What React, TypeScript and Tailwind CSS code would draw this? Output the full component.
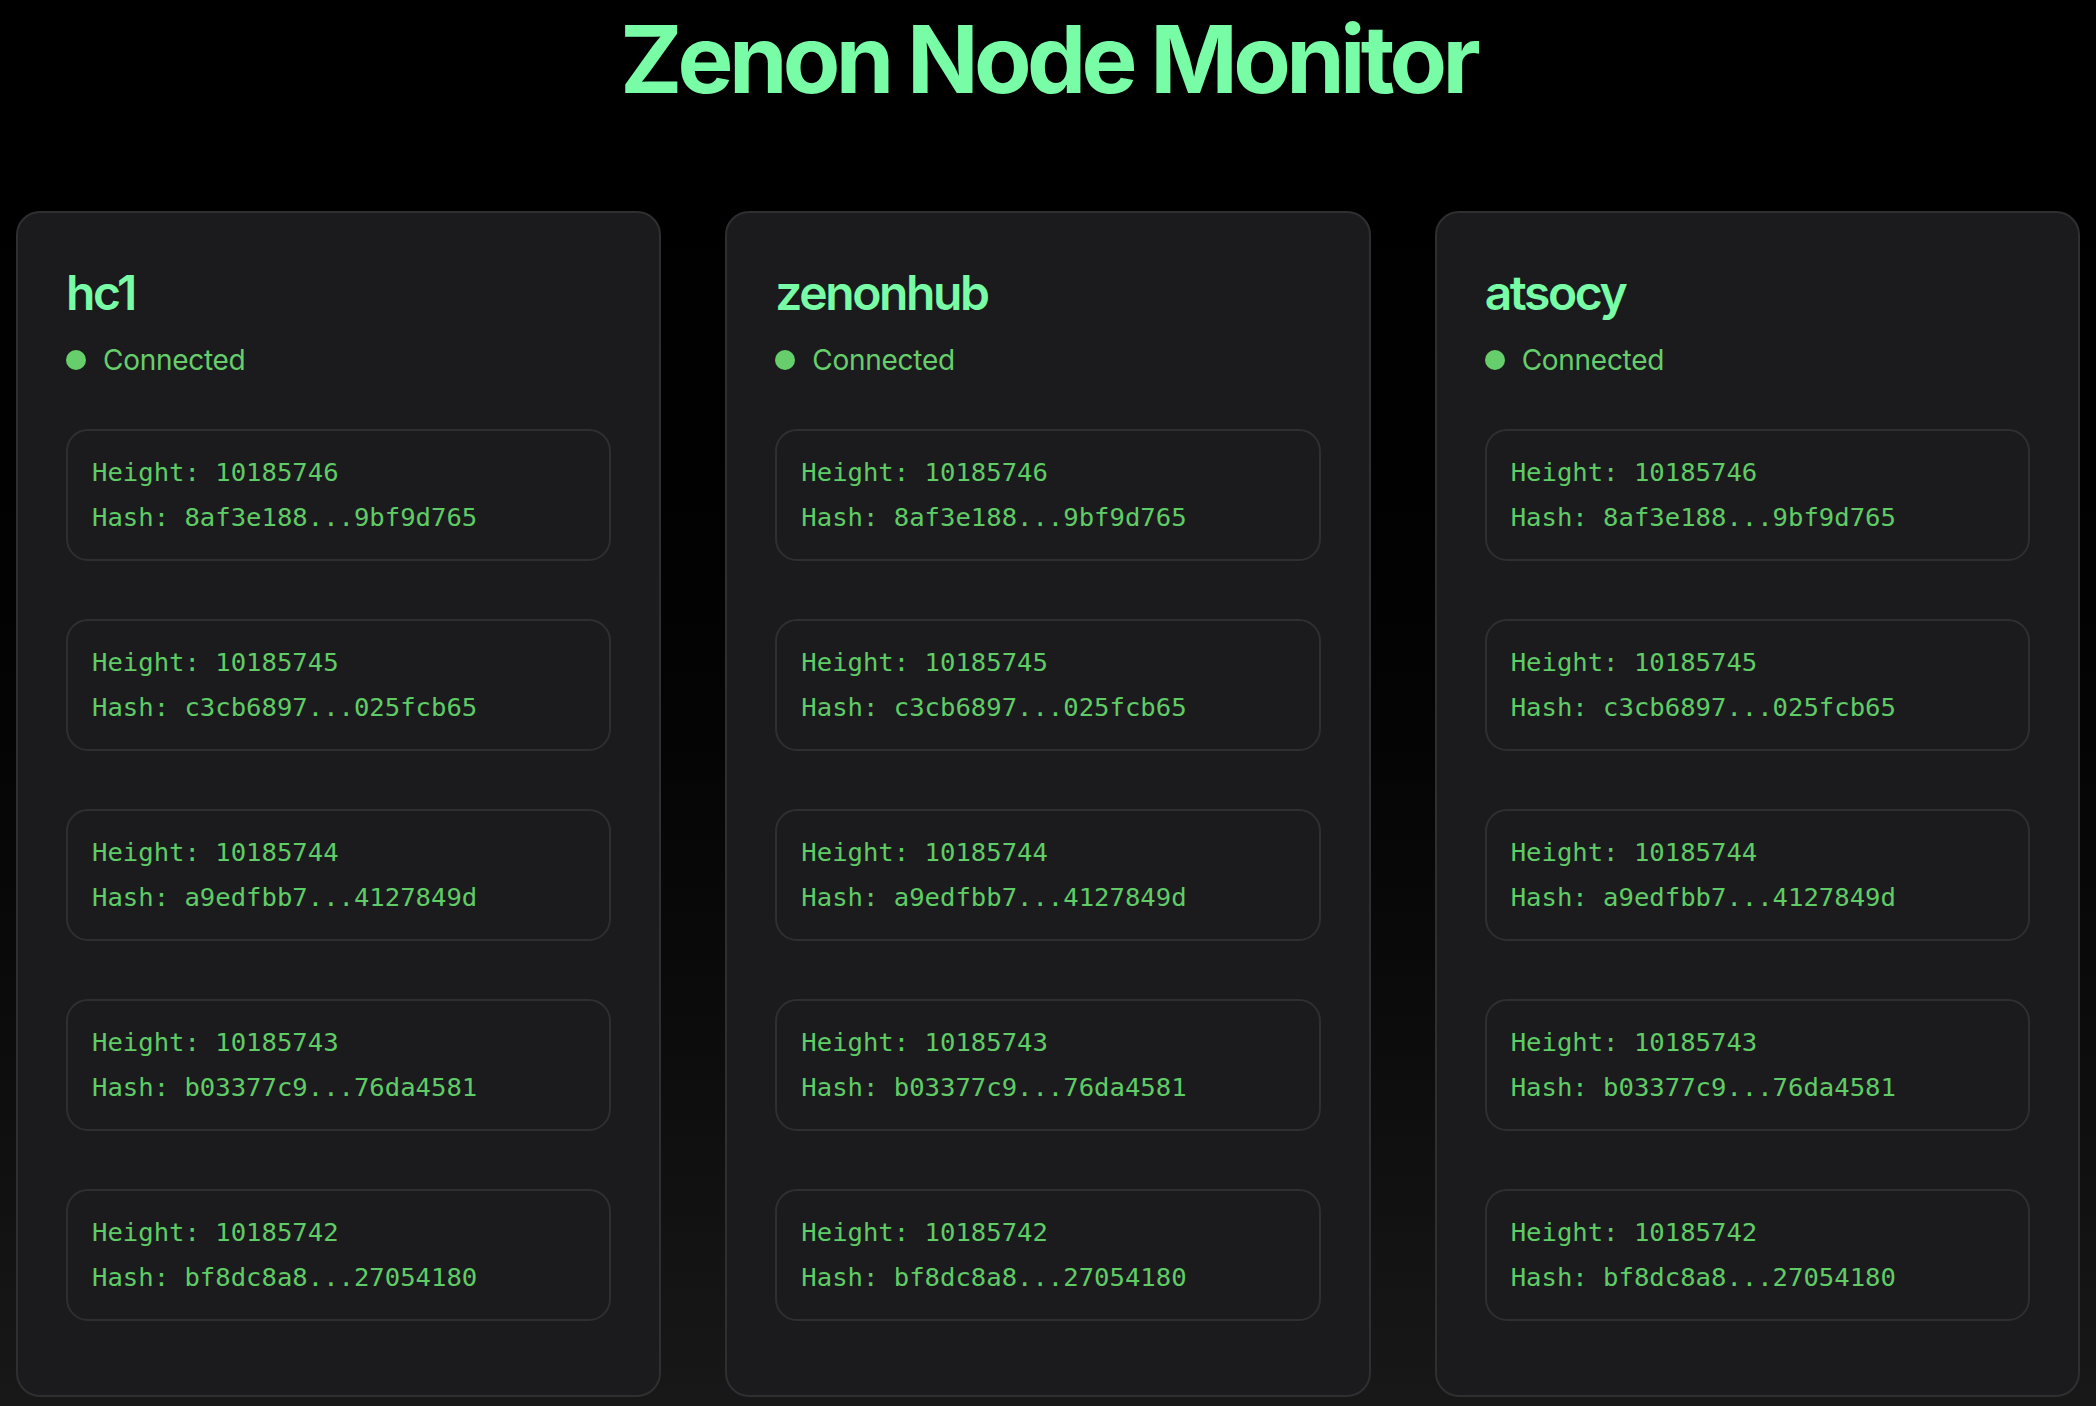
import React from "react";

interface Block {
  height: number;
  hash: string;
}

const blocks: Block[] = [
  { height: 10185746, hash: "8af3e188...9bf9d765" },
  { height: 10185745, hash: "c3cb6897...025fcb65" },
  { height: 10185744, hash: "a9edfbb7...4127849d" },
  { height: 10185743, hash: "b03377c9...76da4581" },
  { height: 10185742, hash: "bf8dc8a8...27054180" },
];

const nodes = ["hc1", "zenonhub", "atsocy"];

const NodeCard: React.FC<{ name: string }> = ({ name }) => {
  return (
    <div className="rounded-3xl border-2 border-[#2f2f32] bg-[#1b1b1d] px-12 pt-[51px] pb-[74px]">
      <h2 className="text-[48px] leading-[58px] font-semibold tracking-[-0.05em] text-[#78fca6]">
        {name}
      </h2>
      <div className="mt-[17px] flex items-center gap-[17px]">
        <span className="h-5 w-5 rounded-full bg-[#66cf6c]"></span>
        <span className="text-[28px] leading-[42px] tracking-[-0.01em] text-[#66cf6c]">Connected</span>
      </div>

      {/* latest blocks */}
      <div className="mt-12 flex flex-col gap-[58px]">
        {blocks.map((b) => (
          <div
            key={b.height}
            className="rounded-[22px] border-2 border-[#2f2f32] bg-[#1b1b1d] px-6 py-[19px] font-['DejaVu_Sans_Mono',monospace] text-[25.6px] leading-[45px] text-[#5fcc66]"
          >
            <div>Height: {b.height}</div>
            <div>Hash: {b.hash}</div>
          </div>
        ))}
      </div>
    </div>
  );
};

export default function App() {
  return (
    <div className="min-h-screen bg-gradient-to-b from-black to-[#181818] px-4 font-['Inter',sans-serif]">
      <h1 className="pt-[12px] text-center text-[94px] leading-none font-bold tracking-[-0.05em] text-[#78fca6]">
        Zenon Node Monitor
      </h1>
      <div className="mt-[105px] grid grid-cols-3 gap-16">
        {nodes.map((n) => (
          <NodeCard key={n} name={n} />
        ))}
      </div>
    </div>
  );
}
